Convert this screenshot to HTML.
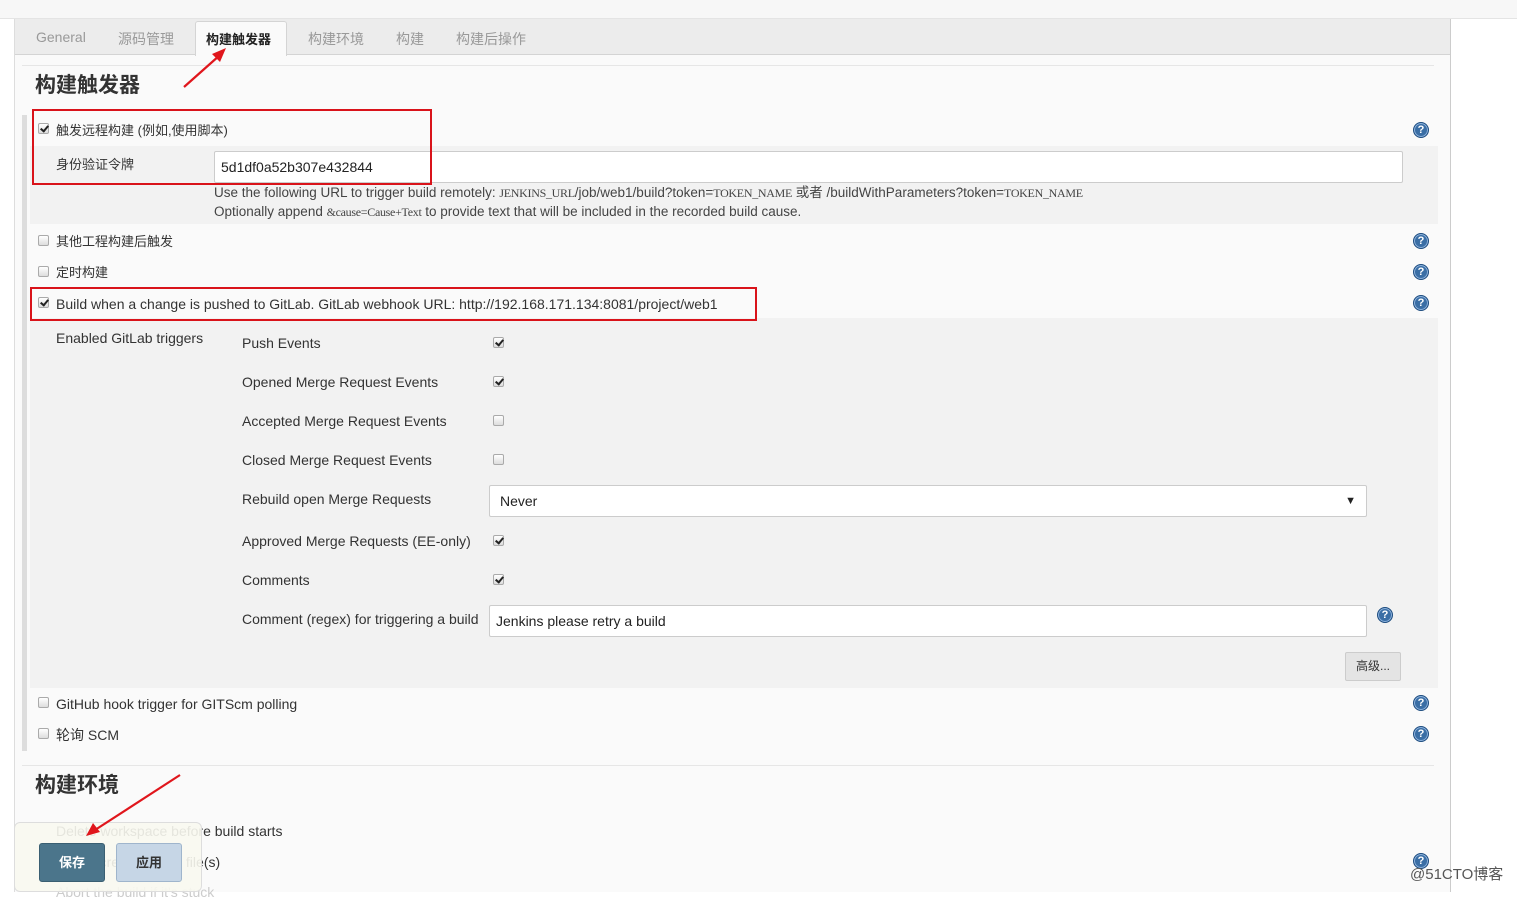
<!DOCTYPE html>
<html><head><meta charset="utf-8"><style>
*{margin:0;padding:0;box-sizing:border-box}
body{width:1517px;height:892px;overflow:hidden;background:#fff;font-family:"Liberation Sans","Noto Sans CJK SC",sans-serif;font-size:14px;color:#333;position:relative}
.a{position:absolute;white-space:nowrap;line-height:17px}
.cb{position:absolute;width:11px;height:11px;border:1px solid #aaa;border-radius:2px;background:linear-gradient(#fff,#ddd)}
.cb.on::after{content:"";position:absolute;left:3px;top:0px;width:3px;height:6px;border:solid #222;border-width:0 2px 2px 0;transform:rotate(40deg)}
.help{position:absolute;width:16px;height:16px;border-radius:50%;background:#3a6ea5;border:1px solid #1e4d80;color:#fff;font:bold 11px "Liberation Sans",sans-serif;text-align:center;line-height:14px;box-shadow:inset 0 0 0 1px #8fb3dd}
.inp{position:absolute;background:#fff;border:1px solid #ccc;border-radius:2px;padding-left:6px;font-size:14px;color:#222}
.red{position:absolute;border:2px solid #d9131a}
.tab{position:absolute;top:29px;color:#999;font-size:14px}
.mono{font-family:'Liberation Serif',serif;font-size:12px;letter-spacing:-0.3px}
</style></head><body>
<div class="a" style="left:0;top:0;width:1517px;height:19px;background:#f7f7f7;border-bottom:1px solid #e4e4e4"></div>
<div class="a" style="left:14px;top:19px;width:1437px;height:873px;background:#fafafa;border-left:1px solid #ddd;border-right:1px solid #ccc"></div>
<div class="a" style="left:15px;top:19px;width:1435px;height:36px;background:#ececec;border-bottom:1px solid #d4d4d4"></div>
<span class="tab" style="left:36px">General</span>
<span class="tab" style="left:118px">源码管理</span>
<div class="a" style="left:195px;top:21px;width:92px;height:35px;background:#fafafa;border:1px solid #d4d4d4;border-bottom:none;border-radius:3px 3px 0 0"></div>
<span class="tab" style="left:206px;color:#222;font-weight:bold;font-size:13px">构建触发器</span>
<span class="tab" style="left:308px">构建环境</span>
<span class="tab" style="left:396px">构建</span>
<span class="tab" style="left:456px">构建后操作</span>
<div class="a" style="left:22px;top:65px;width:1412px;height:1px;background:#e6e6e6"></div>
<span class="a" style="left:35px;top:74px;font-size:21px;line-height:24px;font-weight:bold;color:#333">构建触发器</span>

<div class="a" style="left:22px;top:115px;width:5px;height:636px;background:#ddd"></div>
<div class="a" style="left:30px;top:146px;width:1408px;height:78px;background:#f2f2f2"></div>
<div class="a" style="left:30px;top:318px;width:1408px;height:370px;background:#f2f2f2"></div>

<div class="cb on" style="left:38px;top:123px"></div>
<span class="a" style="left:56px;top:122px;font-size:13px">触发远程构建 (例如,使用脚本)</span>
<div class="help" style="left:1413px;top:122px">?</div>
<span class="a" style="left:56px;top:156px;font-size:13px">身份验证令牌</span>
<div class="inp" style="left:214px;top:151px;width:1189px;height:32px;line-height:30px">5d1df0a52b307e432844</div>
<span class="a" style="left:214px;top:184px;font-size:13.5px;color:#444">Use the following URL to trigger build remotely: <span class="mono">JENKINS_URL</span>/job/web1/build?token=<span class="mono">TOKEN_NAME</span> 或者 /buildWithParameters?token=<span class="mono">TOKEN_NAME</span></span>
<span class="a" style="left:214px;top:203px;font-size:13.5px;color:#444">Optionally append <span class="mono">&amp;cause=Cause+Text</span> to provide text that will be included in the recorded build cause.</span>
<div class="red" style="left:32px;top:109px;width:400px;height:76px"></div>

<div class="cb" style="left:38px;top:235px"></div>
<span class="a" style="left:56px;top:233px;font-size:13px">其他工程构建后触发</span>
<div class="help" style="left:1413px;top:233px">?</div>
<div class="cb" style="left:38px;top:266px"></div>
<span class="a" style="left:56px;top:264px;font-size:13px">定时构建</span>
<div class="help" style="left:1413px;top:264px">?</div>
<div class="cb on" style="left:38px;top:297px"></div>
<span class="a" style="left:56px;top:296px">Build when a change is pushed to GitLab. GitLab webhook URL: http://192.168.171.134:8081/project/web1</span>
<div class="help" style="left:1413px;top:295px">?</div>
<div class="red" style="left:30px;top:287px;width:727px;height:34px"></div>

<span class="a" style="left:56px;top:330px">Enabled GitLab triggers</span>
<span class="a" style="left:242px;top:335px">Push Events</span><div class="cb on" style="left:493px;top:337px"></div>
<span class="a" style="left:242px;top:374px">Opened Merge Request Events</span><div class="cb on" style="left:493px;top:376px"></div>
<span class="a" style="left:242px;top:413px">Accepted Merge Request Events</span><div class="cb" style="left:493px;top:415px"></div>
<span class="a" style="left:242px;top:452px">Closed Merge Request Events</span><div class="cb" style="left:493px;top:454px"></div>
<span class="a" style="left:242px;top:491px">Rebuild open Merge Requests</span>
<div class="inp" style="left:489px;top:485px;width:878px;height:32px;line-height:30px;padding-left:10px">Never<span style="position:absolute;right:10px;font-size:11px">▼</span></div>
<span class="a" style="left:242px;top:533px">Approved Merge Requests (EE-only)</span><div class="cb on" style="left:493px;top:535px"></div>
<span class="a" style="left:242px;top:572px">Comments</span><div class="cb on" style="left:493px;top:574px"></div>
<span class="a" style="left:242px;top:611px">Comment (regex) for triggering a build</span>
<div class="inp" style="left:489px;top:605px;width:878px;height:32px;line-height:30px">Jenkins please retry a build</div>
<div class="help" style="left:1377px;top:607px">?</div>
<div class="a" style="left:1345px;top:652px;width:56px;height:29px;background:#e4e4e4;border:1px solid #ccc;border-radius:2px;font-size:12px;text-align:center;line-height:27px">高级...</div>

<div class="cb" style="left:38px;top:697px"></div>
<span class="a" style="left:56px;top:696px">GitHub hook trigger for GITScm polling</span>
<div class="help" style="left:1413px;top:695px">?</div>
<div class="cb" style="left:38px;top:728px"></div>
<span class="a" style="left:56px;top:727px">轮询 SCM</span>
<div class="help" style="left:1413px;top:726px">?</div>

<div class="a" style="left:22px;top:765px;width:1412px;height:1px;background:#e6e6e6"></div>
<span class="a" style="left:35px;top:774px;font-size:21px;line-height:24px;font-weight:bold;color:#333">构建环境</span>
<span class="a" style="left:56px;top:823px">Delete workspace before build starts</span>
<span class="a" style="left:56px;top:854px">Use secret text(s) or file(s)</span>
<span class="a" style="left:56px;top:884px;color:#ccc">Abort the build if it's stuck</span>
<div class="help" style="left:1413px;top:853px">?</div>
<div class="a" style="left:14px;top:822px;width:188px;height:70px;background:rgba(248,248,240,0.9);border:1px solid #ddd;border-radius:6px"></div>
<div class="a" style="left:39px;top:843px;width:66px;height:39px;background:#4b758b;border:1px solid #3a5f72;border-radius:3px;color:#fff;font-weight:bold;font-size:13px;text-align:center;line-height:37px">保存</div>
<div class="a" style="left:116px;top:843px;width:66px;height:39px;background:#c6d6e6;border:1px solid #9fb5cc;border-radius:3px;color:#333;font-weight:bold;font-size:13px;text-align:center;line-height:37px">应用</div>
<span class="a" style="left:1410px;top:866px;font-size:15px;color:#555">@51CTO博客</span>

<svg class="a" style="left:0;top:0" width="1517" height="892">
<g stroke="#e0161c" stroke-width="2.2" fill="#e0161c">
<line x1="184" y1="87" x2="220" y2="55"/><polygon points="226,48 212,54 220,62" stroke="none"/>
<line x1="180" y1="775" x2="95" y2="830"/><polygon points="86,836 93,823 100,832" stroke="none"/>
</g></svg>
</body></html>
